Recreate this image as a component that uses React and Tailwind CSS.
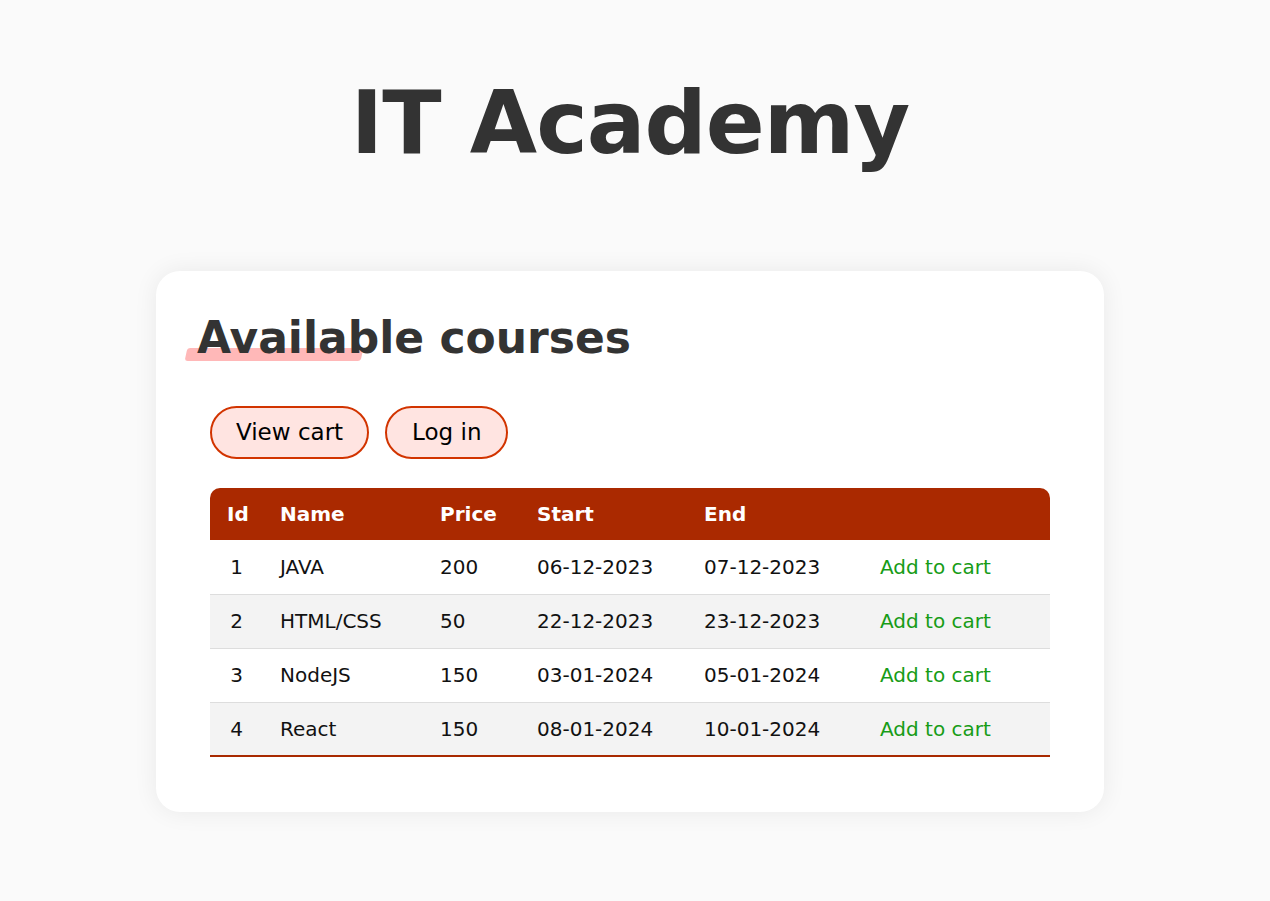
const courses = [
  { id: 1, name: "JAVA", price: 200, start: "06-12-2023", end: "07-12-2023" },
  { id: 2, name: "HTML/CSS", price: 50, start: "22-12-2023", end: "23-12-2023" },
  { id: 3, name: "NodeJS", price: 150, start: "03-01-2024", end: "05-01-2024" },
  { id: 4, name: "React", price: 150, start: "08-01-2024", end: "10-01-2024" },
];

const font = { fontFamily: '"DejaVu Sans", Verdana, sans-serif' };

export default function App() {
  return (
    <div className="min-h-screen bg-[#fafafa] pt-[80px] pr-[10px] pb-[90px] text-[#333]" style={font}>
      <h1 className="text-center text-[87px] font-bold leading-none tracking-[-1px] text-[#333]">
        IT Academy
      </h1>

      <div className="mx-auto mt-[104px] w-[948px] rounded-[24px] bg-white px-[54px] pt-[41px] pb-[55px] shadow-[0_0_24px_rgba(0,0,0,0.07)]">
        <h2 className="relative ml-[-13px] inline-block text-[44px] font-bold leading-[52px] text-[#333]">
          <span className="absolute left-[-11px] top-[36px] h-[13px] w-[176px] -skew-x-12 rounded-[3px] bg-[#ffb8b8]" />
          <span className="relative">Available courses</span>
        </h2>

        <div className="mt-[42px] flex gap-[16px]">
          <button className="h-[53px] rounded-full border-2 border-[#d23400] bg-[#ffe4e1] px-[24px] text-[23px] text-black">
            View cart
          </button>
          <button className="h-[53px] rounded-full border-2 border-[#d23400] bg-[#ffe4e1] px-[25px] text-[23px] text-black">
            Log in
          </button>
        </div>

        <table className="mt-[29px] w-[840px] table-fixed border-collapse border-b-2 border-[#a82900] text-[20px]">
          <colgroup>
            <col className="w-[53px]" />
            <col className="w-[160px]" />
            <col className="w-[97px]" />
            <col className="w-[167px]" />
            <col className="w-[176px]" />
            <col />
          </colgroup>
          <thead>
            <tr className="h-[52px] bg-[#aa2900] text-left font-bold text-white">
              <th className="rounded-tl-[10px] pl-[17px]">Id</th>
              <th className="pl-[17px]">Name</th>
              <th className="pl-[17px]">Price</th>
              <th className="pl-[17px]">Start</th>
              <th className="pl-[17px]">End</th>
              <th className="rounded-tr-[10px]"></th>
            </tr>
          </thead>
          <tbody>
            {courses.map((c, i) => (
              <tr
                key={c.id}
                className={`h-[54px] text-[#111] ${i > 0 ? "border-t border-[#dddddd]" : ""} ${
                  i % 2 === 1 ? "bg-[#f3f3f3]" : "bg-white"
                }`}
              >
                <td className="text-center">{c.id}</td>
                <td className="pl-[17px]">{c.name}</td>
                <td className="pl-[17px]">{c.price}</td>
                <td className="pl-[17px]">{c.start}</td>
                <td className="pl-[17px]">{c.end}</td>
                <td className="pl-[17px] text-[#179c17]">Add to cart</td>
              </tr>
            ))}
          </tbody>
        </table>
      </div>
    </div>
  );
}
